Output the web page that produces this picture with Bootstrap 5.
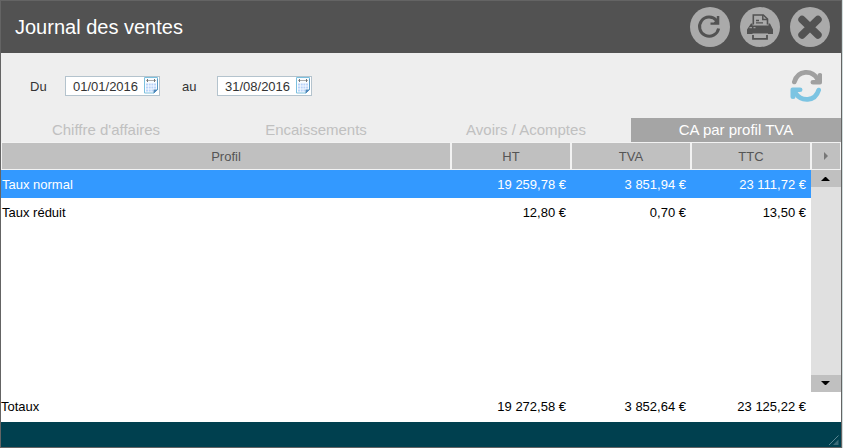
<!DOCTYPE html>
<html lang="fr">
<head>
<meta charset="utf-8">
<meta name="viewport" content="width=device-width, initial-scale=1">
<title>Journal des ventes</title>
<link href="https://cdn.jsdelivr.net/npm/bootstrap@5.3.0/dist/css/bootstrap.min.css" rel="stylesheet">
<style>
body{font-family:"Liberation Sans",Arial,sans-serif;font-size:13px;line-height:16px;color:#000;background:#d0dcdc;padding-right:1px}
.win{border:1px solid #646464;background:#fff}
.title-bar{background:#525252;height:52px;padding:0 11px 0 14px}
.title-bar h1{font-size:20px;line-height:24px}
.round-btn{width:40px;height:40px;background:#aaa}
.filters{background:#eee;height:65px;padding:0 17px 0 29px}
.filters label{width:35px;color:#333;padding-top:2px}
.date-box{width:95px;height:20px;border:1px solid #b4c3cd;background:#fff;margin-right:22px}
.date-box input{width:78px;padding:2px 0 0 7px;color:#333;outline:0}
.tabs{background:#eee}
.tabs button{height:24px;font-size:15px;line-height:24px;color:#c0c0c0;background:transparent}
.tabs button.active{background:#a5a5a5;color:#fff}
.grid{table-layout:fixed;border-collapse:separate;border-spacing:0}
.grid .amount{width:120px}
.grid th.head,.side-head{height:28px;border:1px solid #f2f2f2;background:#c0c0c0;color:#555;font-weight:400;text-align:center;padding:0}
.grid th.head{padding-top:2px}
.grid tbody td,.grid tbody th{height:28px;padding:2px 5px 0 1px;font-weight:400}
.grid .num{text-align:right}
.grid .selected{background:#39f;color:#fff}
.grid tbody .filler td{height:auto}
.grid tfoot td,.grid tfoot th{height:30px;padding:0 5px 0 0;font-weight:400}
.side{width:30px}
.track{background:#e0e0e0}
.track button{height:17px;background:#c0c0c0}
.track-end{height:30px}
.status{background:#00404f;height:25px}
svg{display:block}
</style>
</head>
<body>
<main class="win d-flex flex-column min-vh-100">
  <header class="title-bar d-flex align-items-center">
    <h1 class="m-0 text-white fw-normal flex-grow-1">Journal des ventes</h1>
    <div class="d-flex" style="gap:10px">
      <button type="button" class="round-btn btn p-0 border-0 rounded-circle" aria-label="Recharger">
        <svg width="40" height="40" viewBox="0 0 40 40"><path d="M26.500 13.500A9.600 9.600 0 1 0 28.600 21.500" fill="none" stroke="#525252" stroke-width="3"/><path d="M29.300 9v8.800h-8.800v-2.300h3.300l3-3.500V9z" fill="#525252"/></svg>
      </button>
      <button type="button" class="round-btn btn p-0 border-0 rounded-circle" aria-label="Imprimer">
        <svg width="40" height="40" viewBox="0 0 40 40"><path d="M11 16.500h1.500v2h16v-2h1.500l3 6v4.500H7V22.500z" fill="#525252"/><path d="M13.300 17.500V8h10l4.200 4v5.500" fill="#aaa" stroke="#525252" stroke-width="1.600"/><path d="M22.800 8v4.500h4.700" fill="none" stroke="#525252" stroke-width="1.500"/><path d="M16 13.500h3M16 15.800h7" stroke="#525252" stroke-width="1.300"/><path d="M9.500 20.700h2.500M13.500 20.700h2" stroke="#aaa"/><path d="M12.500 27.200h15.500" stroke="#aaa" stroke-width="1.500"/><path d="M13 28v3.800h14V28" fill="none" stroke="#525252" stroke-width="1.800"/></svg>
      </button>
      <button type="button" class="round-btn btn p-0 border-0 rounded-circle" aria-label="Fermer">
        <svg width="40" height="40" viewBox="0 0 40 40"><path d="M12 12.500l16 15.500M28 12.500L12 28" stroke="#525252" stroke-width="7.400" stroke-linecap="round"/></svg>
      </button>
    </div>
  </header>

  <form class="filters d-flex align-items-center">
    <label for="from">Du</label>
    <div class="date-box d-flex align-items-center">
      <input id="from" type="text" class="border-0 bg-transparent" value="01/01/2016">
      <button type="button" class="btn p-0 border-0" aria-label="Choisir la date de début">
        <svg width="15" height="17" viewBox="0 0 15 17"><path d="M.5.5h13v12l-3.500 3.500H.5z" fill="#f8fcff" stroke="#7cc0de"/><path d="M13.500 2v10.500l-3.500 3.500" fill="none" stroke="#5a9ac4"/><path d="M2 3.500h10" stroke="#aaa"/><path d="M3.500 2v3M10.500 2v3" stroke="#777"/><path d="M2 7.500h10M2 10.500h10M2 13.500h7" stroke="#b8d2fa" stroke-width="2" stroke-dasharray="2 .7"/><path d="M9.500 16.500v-4h4.500z" fill="#4d87ba"/></svg>
      </button>
    </div>
    <label for="to">au</label>
    <div class="date-box d-flex align-items-center">
      <input id="to" type="text" class="border-0 bg-transparent" value="31/08/2016">
      <button type="button" class="btn p-0 border-0" aria-label="Choisir la date de fin">
        <svg width="15" height="17" viewBox="0 0 15 17"><path d="M.5.5h13v12l-3.500 3.500H.5z" fill="#f8fcff" stroke="#7cc0de"/><path d="M13.500 2v10.500l-3.500 3.500" fill="none" stroke="#5a9ac4"/><path d="M2 3.500h10" stroke="#aaa"/><path d="M3.500 2v3M10.500 2v3" stroke="#777"/><path d="M2 7.500h10M2 10.500h10M2 13.500h7" stroke="#b8d2fa" stroke-width="2" stroke-dasharray="2 .7"/><path d="M9.500 16.500v-4h4.500z" fill="#4d87ba"/></svg>
      </button>
    </div>
    <button type="button" class="btn p-0 border-0 ms-auto" aria-label="Actualiser">
      <svg width="34" height="32" viewBox="0 0 34 32"><g fill="none" stroke-width="4.600" stroke-linecap="round"><path d="M4.300 12C8-.2 22-.4 27.500 9" stroke="#a0a0a0"/><path d="M28.700 20C25 32.200 11 31.800 5.500 23" stroke="#7cc4e2"/></g><path d="M27.500 5.500q0-2.500 2.500-2.500t2 2.500V12.500q0 2-2 2h-7q-2.500 0-2.500-2.200t2.500-2.300h4.500z" fill="#a0a0a0"/><path d="M5.500 26.500q0 2.500-2.500 2.500t-2.500-2.500v-7q0-2 2-2h7.500q2.500 0 2.500 2.200t-2.500 2.300H5.500z" fill="#7cc4e2"/></svg>
    </button>
  </form>

  <nav class="tabs row g-0" role="tablist" aria-label="Rapports">
    <button type="button" role="tab" class="col border-0 p-0">Chiffre d'affaires</button>
    <button type="button" role="tab" class="col border-0 p-0">Encaissements</button>
    <button type="button" role="tab" class="col border-0 p-0">Avoirs / Acomptes</button>
    <button type="button" role="tab" class="col border-0 p-0 active" aria-selected="true">CA par profil TVA</button>
  </nav>

  <section class="d-flex flex-grow-1">
    <div class="flex-grow-1">
      <table class="grid w-100 h-100">
        <thead>
          <tr><th class="head" scope="col">Profil</th><th class="head amount" scope="col">HT</th><th class="head amount" scope="col">TVA</th><th class="head amount" scope="col">TTC</th></tr>
        </thead>
        <tbody>
          <tr class="selected"><th scope="row">Taux normal</th><td class="num">19 259,78 €</td><td class="num">3 851,94 €</td><td class="num">23 111,72 €</td></tr>
          <tr><th scope="row">Taux réduit</th><td class="num">12,80 €</td><td class="num">0,70 €</td><td class="num">13,50 €</td></tr>
          <tr class="filler"><td colspan="4"></td></tr>
        </tbody>
        <tfoot>
          <tr><th scope="row">Totaux</th><td class="num">19 272,58 €</td><td class="num">3 852,64 €</td><td class="num">23 125,22 €</td></tr>
        </tfoot>
      </table>
    </div>
    <div class="side d-flex flex-column flex-shrink-0">
      <button type="button" class="side-head d-flex align-items-center justify-content-center" aria-label="Colonnes suivantes">
        <svg width="6" height="8" viewBox="0 0 6 8"><path d="M1 0l4 4-4 4z" fill="#777"/></svg>
      </button>
      <div class="track d-flex flex-column justify-content-between flex-grow-1">
        <button type="button" class="border-0 p-0 d-flex align-items-center justify-content-center" aria-label="Défiler vers le haut">
          <svg width="10" height="5" viewBox="0 0 10 5"><path d="M0 5l4-4h1l4 4z"/></svg>
        </button>
        <button type="button" class="border-0 p-0 d-flex align-items-center justify-content-center" aria-label="Défiler vers le bas">
          <svg width="10" height="5" viewBox="0 0 10 5"><path d="M0 0h9L5 4H4z"/></svg>
        </button>
      </div>
      <div class="track-end"></div>
    </div>
  </section>

  <footer class="status d-flex justify-content-end align-items-end">
    <svg width="13" height="13" viewBox="0 0 13 13"><path d="M1 11L10.500 1.500" stroke="#5a8590"/><path d="M5 11L10.500 5.500V11z" fill="#3a6b78"/></svg>
  </footer>
</main>
<script src="https://cdn.jsdelivr.net/npm/bootstrap@5.3.0/dist/js/bootstrap.bundle.min.js"></script>
</body>
</html>
